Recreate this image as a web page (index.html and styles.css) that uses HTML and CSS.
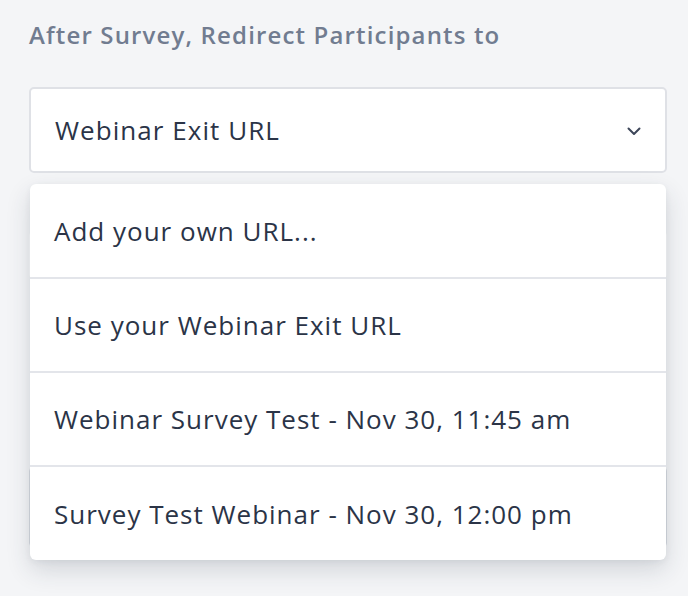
FILE: index.html
```html
<!DOCTYPE html>
<html>
<head>
<meta charset="utf-8">
<link rel="stylesheet" href="styles.css">
</head>
<body>
<div class="field">
  <div class="label">After Survey, Redirect Participants to</div>
  <div class="select-wrap">
    <div class="select">
      <span class="value">Webinar Exit URL</span>
      <svg class="chevron" width="14" height="9" viewBox="0 0 14 9"><path d="M1.5 1.5 L7 7 L12.5 1.5" fill="none" stroke="#3d4659" stroke-width="2" stroke-linecap="round" stroke-linejoin="round"/></svg>
    </div>
    <div class="under">
      <div class="under-box one"></div>
      <div class="under-box two"></div>
    </div>
    <ul class="menu">
      <li class="item">Add your own URL...</li>
      <li class="item">Use your Webinar Exit URL</li>
      <li class="item">Webinar Survey Test - Nov 30, 11:45 am</li>
      <li class="item">Survey Test Webinar - Nov 30, 12:00 pm</li>
    </ul>
  </div>
</div>
</body>
</html>
```

FILE: styles.css
```css
html, body {
  margin: 0;
  padding: 0;
  background: #f4f5f7;
}
body {
  font-family: "Open Sans", Lato, sans-serif;
  color: #2b3447;
  width: 688px;
  height: 596px;
  overflow: hidden;
}
.field {
  padding: 20px 21px 0 29px;
}
.label {
  font-size: 24px;
  font-weight: 600;
  color: #717c90;
  line-height: 30px;
  letter-spacing: 1.15px;
}
.select-wrap {
  position: relative;
  margin-top: 37px;
}
.select {
  height: 86px;
  box-sizing: border-box;
  background: #fff;
  border: 2px solid #dfe1e6;
  border-radius: 5px;
  display: flex;
  align-items: center;
  justify-content: space-between;
  padding: 0 24px 0 24px;
  font-size: 26px;
  letter-spacing: 1.05px;
}
.chevron {
  margin-top: 2px;
}
.under {
  padding-top: 59px;
}
.under-box {
  background: #fff;
  border-radius: 4px;
}
.under-box.one {
  height: 46px;
  background: #fbfbfc;
}
.under-box.two {
  margin-top: 189px;
  height: 78px;
  border: 1px solid #d8dbe1;
}
.menu {
  position: absolute;
  top: 97px;
  left: 1px;
  right: 1px;
  margin: 0;
  padding: 0;
  list-style: none;
  background: #fff;
  border-radius: 6px;
  box-shadow: 0 10px 24px rgba(40, 48, 70, 0.16), 0 2px 6px rgba(40, 48, 70, 0.06);
  overflow: hidden;
}
.item {
  box-sizing: border-box;
  height: 94px;
  display: flex;
  align-items: center;
  padding-left: 24px;
  font-size: 26px;
  letter-spacing: 1px;
  color: #2b3447;
  border-top: 2px solid #e3e5ea;
}
.item:first-child {
  border-top: none;
  height: 93px;
}
.item:last-child {
  height: 95px;
}
```
